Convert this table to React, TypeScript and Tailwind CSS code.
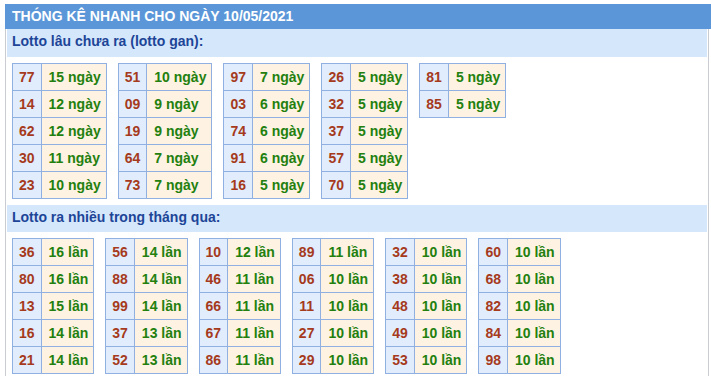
import React from "react";

type Row = [string, string];

const gan: Row[][] = [
  [["77", "15 ngày"], ["14", "12 ngày"], ["62", "12 ngày"], ["30", "11 ngày"], ["23", "10 ngày"]],
  [["51", "10 ngày"], ["09", "9 ngày"], ["19", "9 ngày"], ["64", "7 ngày"], ["73", "7 ngày"]],
  [["97", "7 ngày"], ["03", "6 ngày"], ["74", "6 ngày"], ["91", "6 ngày"], ["16", "5 ngày"]],
  [["26", "5 ngày"], ["32", "5 ngày"], ["37", "5 ngày"], ["57", "5 ngày"], ["70", "5 ngày"]],
  [["81", "5 ngày"], ["85", "5 ngày"]],
];

const nhieu: Row[][] = [
  [["36", "16 lần"], ["80", "16 lần"], ["13", "15 lần"], ["16", "14 lần"], ["21", "14 lần"]],
  [["56", "14 lần"], ["88", "14 lần"], ["99", "14 lần"], ["37", "13 lần"], ["52", "13 lần"]],
  [["10", "12 lần"], ["46", "11 lần"], ["66", "11 lần"], ["67", "11 lần"], ["86", "11 lần"]],
  [["89", "11 lần"], ["06", "10 lần"], ["11", "10 lần"], ["27", "10 lần"], ["29", "10 lần"]],
  [["32", "10 lần"], ["38", "10 lần"], ["48", "10 lần"], ["49", "10 lần"], ["53", "10 lần"]],
  [["60", "10 lần"], ["68", "10 lần"], ["82", "10 lần"], ["84", "10 lần"], ["98", "10 lần"]],
];

function Tbl({ rows }: { rows: Row[] }) {
  return (
    <table className="border-collapse border border-[#8fb0e0]">
      <tbody>
        {rows.map(([n, t], i) => (
          <tr key={i}>
            <td className="border border-[#8fb0e0] bg-[#e1edfc] h-[27px] py-0 px-[6px] text-center text-[#a53a1d] font-bold text-[14px] leading-[16px]">
              {n}
            </td>
            <td className="border border-[#8fb0e0] bg-[#fef3e2] h-[27px] py-0 pl-[7px] pr-[5px] text-[#23800f] font-bold text-[14px] leading-[16px] whitespace-nowrap">
              {t}
            </td>
          </tr>
        ))}
      </tbody>
    </table>
  );
}

export default function App() {
  return (
    <div
      className="bg-white w-[711px] h-[379px] overflow-hidden pt-[4px] pl-[5px]"
      style={{ fontFamily: "Arial, 'Liberation Sans', sans-serif" }}
    >
      <div className="h-[25px] w-[706px] bg-[#5b97d8] flex items-center pl-[7px] text-white font-bold text-[14px]">
        THÓNG KÊ NHANH CHO NGÀY 10/05/2021
      </div>
      <div className="w-[704px] border-x border-[#c9ccd1] px-[1px] pb-[2px]">
        <div className="h-[28px] bg-[#d5e7fb] pl-[5px] pt-[4px] text-[#1d4597] font-bold text-[14px] leading-[16px]">
          Lotto lâu chưa ra (lotto gan):
        </div>
        <div className="flex items-start gap-[11px] pl-[5px] pt-[6px] pb-[6px]">
          {gan.map((r, i) => (
            <Tbl key={i} rows={r} />
          ))}
        </div>
        <div className="h-[27px] bg-[#d5e7fb] pl-[5px] pt-[4px] text-[#1d4597] font-bold text-[14px] leading-[16px]">
          Lotto ra nhiều trong tháng qua:
        </div>
        <div className="flex items-start gap-[11px] pl-[5px] pt-[6px]">
          {nhieu.map((r, i) => (
            <Tbl key={i} rows={r} />
          ))}
        </div>
      </div>
    </div>
  );
}
